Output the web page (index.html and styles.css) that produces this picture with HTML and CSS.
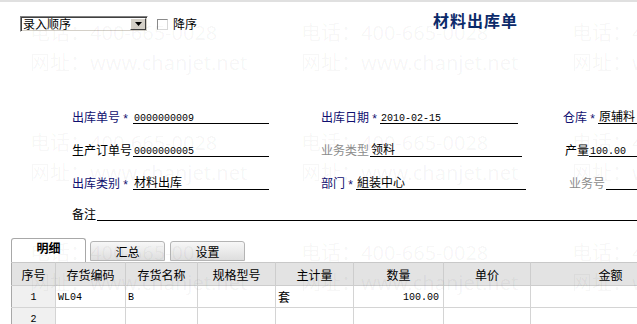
FILE: index.html
```html
<!DOCTYPE html>
<html lang="zh-CN">
<head>
<meta charset="utf-8">
<title>材料出库单</title>
<link rel="stylesheet" href="styles.css">
</head>
<body>
<div class="topbar"></div>
<div class="toolbar">
  <div class="select">
    <span class="select-text">录入顺序</span>
    <span class="select-btn"><svg width="7" height="4" viewBox="0 0 7 4"><path d="M0 0h7L3.5 4z" fill="#000"/></svg></span>
  </div>
  <span class="checkbox"></span>
  <span class="chk-label">降序</span>
  <h1 class="title">材料出库单</h1>
</div>

<div class="form">
  <div class="form-row">
    <div class="field col1">
      <span class="lab-fixed"><span class="lab navy">出库单号</span><span class="star">*</span></span>
      <span class="val w136"><span class="num">0000000009</span></span>
    </div>
    <div class="field col2">
      <span class="lab navy">出库日期</span><span class="star">*</span>
      <span class="val w138"><span class="num">2010-02-15</span></span>
    </div>
    <div class="field col3">
      <span class="lab navy">仓库</span><span class="star">*</span>
      <span class="val grow">原辅料</span>
    </div>
  </div>
  <div class="form-row">
    <div class="field col1">
      <span class="lab-fixed"><span class="lab">生产订单号</span></span>
      <span class="val w136"><span class="num">0000000005</span></span>
    </div>
    <div class="field col2">
      <span class="lab gray">业务类型</span>
      <span class="val w152 ml1">领料</span>
    </div>
    <div class="field col3 ml2">
      <span class="lab">产量</span>
      <span class="val grow"><span class="num">100.00</span></span>
    </div>
  </div>
  <div class="form-row">
    <div class="field col1">
      <span class="lab-fixed"><span class="lab navy">出库类别</span><span class="star">*</span></span>
      <span class="val w136">材料出库</span>
    </div>
    <div class="field col2">
      <span class="lab navy">部门</span><span class="star">*</span>
      <span class="val w170">組装中心</span>
    </div>
    <div class="field col3 ml6">
      <span class="lab gray">业务号</span>
      <span class="val grow ml1"></span>
    </div>
  </div>
  <div class="remark-row">
    <span class="lab">备注</span>
    <span class="val grow ml1"></span>
  </div>
</div>

<div class="tabs">
  <div class="tab active">明细</div>
  <div class="tab">汇总</div>
  <div class="tab">设置</div>
</div>

<div class="grid-wrap">
<table class="grid">
  <colgroup>
    <col class="c-idx"><col class="c-code"><col class="c-name"><col class="c-spec"><col class="c-unit"><col class="c-qty"><col class="c-price"><col class="c-amt">
  </colgroup>
  <thead>
    <tr><th>序号</th><th>存货编码</th><th>存货名称</th><th>规格型号</th><th>主计量</th><th>数量</th><th>单价</th><th>金额</th></tr>
  </thead>
  <tbody>
    <tr><td class="idx"><span class="num">1</span></td><td><span class="num">WL04</span></td><td><span class="num">B</span></td><td></td><td>套</td><td class="right"><span class="num">100.00</span></td><td></td><td></td></tr>
    <tr><td class="idx"><span class="num">2</span></td><td></td><td></td><td></td><td></td><td></td><td></td><td></td></tr>
  </tbody>
</table>
</div>

<div class="watermark" aria-hidden="true">
  <div class="wm-grid">
    <div class="wm"><div>电话：400-665-0028</div><div>网址：www.chanjet.net</div></div>
    <div class="wm"><div>电话：400-665-0028</div><div>网址：www.chanjet.net</div></div>
    <div class="wm"><div>电话：400-665-0028</div><div>网址：www.chanjet.net</div></div>
    <div class="wm"><div>电话：400-665-0028</div><div>网址：www.chanjet.net</div></div>
    <div class="wm"><div>电话：400-665-0028</div><div>网址：www.chanjet.net</div></div>
    <div class="wm"><div>电话：400-665-0028</div><div>网址：www.chanjet.net</div></div>
    <div class="wm"><div>电话：400-665-0028</div><div>网址：www.chanjet.net</div></div>
    <div class="wm"><div>电话：400-665-0028</div><div>网址：www.chanjet.net</div></div>
    <div class="wm"><div>电话：400-665-0028</div><div>网址：www.chanjet.net</div></div>
  </div>
</div>
</body>
</html>
```

FILE: styles.css
```css
* { box-sizing: border-box; }
html, body { margin: 0; padding: 0; }
body {
  width: 637px;
  height: 324px;
  overflow: hidden;
  position: relative;
  background: #fff;
  color: #000;
  font-family: "Noto Sans CJK SC", "Noto Sans", sans-serif;
  font-size: 12px;
}

.topbar { height: 2px; background: #e0e0e0; }

.toolbar {
  display: flex;
  align-items: center;
  height: 16px;
  margin-top: 14px;
  padding-left: 20px;
}
.select {
  width: 128px;
  height: 16px;
  display: flex;
  background: #fff;
  border-top: 1px solid #808080;
  border-left: 1px solid #808080;
  border-bottom: 1px solid #fff;
  border-right: 1px solid #fff;
  box-shadow: inset 1px 1px 0 #404040, inset -1px -1px 0 #d4d0c8;
}
.select-text {
  flex: 1;
  padding-left: 2px;
  line-height: 14px;
  font-size: 12px;
}
.select-btn {
  width: 16px;
  margin: 1px;
  background: #d4d0c8;
  border: 1px solid;
  border-color: #fff #404040 #404040 #fff;
  display: flex;
  align-items: center;
  justify-content: center;
}
.checkbox {
  width: 11px;
  height: 11px;
  margin-left: 9px;
  border: 1px solid #8a8a8a;
  border-right-color: #d8d8d8;
  border-bottom-color: #d8d8d8;
  background: #fff;
}
.chk-label { margin-left: 5px; line-height: 14px; }
.title {
  margin: -8px 0 0 236px;
  font-size: 16px;
  line-height: 18px;
  font-weight: bold;
  color: #0b2a6a;
  letter-spacing: 1px;
}

.form { margin-top: 59px; }
.form-row {
  display: flex;
  align-items: flex-end;
  height: 33px;
  padding-left: 72px;
}
.field { display: flex; align-items: flex-end; }
.col1 { width: 249px; }
.col2 { width: 242px; }
.col3 { flex: 1; overflow: hidden; }
.lab-fixed { display: flex; width: 61px; }
.lab { line-height: 14px; white-space: nowrap; }
.navy { color: #101070; }
.gray { color: #8c8c8c; }
.star {
  display: block;
  width: 11px;
  height: 14px;
  text-align: center;
  font-family: "Liberation Sans", sans-serif;
  font-size: 12px;
  line-height: 18px;
  color: #101070;
}
.val {
  display: block;
  height: 15px;
  line-height: 14px;
  border-bottom: 1px solid #000;
  white-space: nowrap;
  padding-left: 1px;
}
.num { font-family: "Liberation Mono", monospace; font-size: 10px; }
.w136 { width: 136px; }
.w138 { width: 138px; }
.w152 { width: 152px; }
.w170 { width: 170px; }
.grow { flex: 1; }
.ml1 { margin-left: 1px; }
.ml2 { margin-left: 2px; }
.ml6 { margin-left: 6px; }

.remark-row {
  display: flex;
  align-items: flex-end;
  height: 31px;
  padding-left: 72px;
}

.tabs {
  display: flex;
  align-items: flex-end;
  height: 24px;
  margin-top: 17px;
  padding-left: 11px;
}
.tab {
  width: 75px;
  height: 20px;
  margin-left: 4px;
  margin-bottom: 1px;
  text-align: center;
  line-height: 19px;
  border: 1px solid #b4b4b4;
  border-radius: 3px 3px 0 0;
  background: linear-gradient(#f7f7f7, #dedede);
}
.tab:last-child { margin-left: 5px; }
.tab.active {
  margin-left: 0;
  margin-bottom: 0;
  height: 24px;
  line-height: 18px;
  font-weight: bold;
  background: #fff;
  border-color: #a8a8a8;
  border-bottom: none;
}

.grid-wrap { overflow: hidden; height: 68px; }
.grid {
  margin-left: 11px;
  border-collapse: collapse;
  table-layout: fixed;
  width: 679px;
  border-left: 1px solid #a8a8a8;
}
.c-idx { width: 44px; }
.c-code { width: 70px; }
.c-name { width: 72px; }
.c-spec { width: 78px; }
.c-unit { width: 78px; }
.c-qty { width: 90px; }
.c-price { width: 87px; }
.c-amt { width: 160px; }
.grid th {
  height: 23px;
  padding: 0;
  font-weight: normal;
  background: #e3e3e3;
  border-top: 1px solid #c8c8c8;
  border-right: 1px solid #cdcdcd;
  border-bottom: 1px solid #cdcdcd;
  text-align: center;
}
.grid td {
  height: 20px;
  padding: 0 2px;
  border-right: 1px solid #d4d4d4;
  border-bottom: 1px solid #d4d4d4;
  line-height: 18px;
}
.grid td.idx { text-align: center; background: #f0f0f0; }
.grid td.right { text-align: right; padding-right: 4px; }

.watermark {
  position: absolute;
  top: 0;
  left: 0;
  width: 637px;
  height: 324px;
  overflow: hidden;
  pointer-events: none;
}
.wm-grid {
  display: grid;
  grid-template-columns: repeat(3, 271px);
  grid-auto-rows: 110px;
  padding: 18px 0 0 30px;
  color: rgba(0, 0, 0, 0.045);
  font-family: "Noto Sans", "Noto Sans CJK SC", sans-serif;
  font-size: 20px;
  line-height: 30px;
  white-space: nowrap;
}
```
